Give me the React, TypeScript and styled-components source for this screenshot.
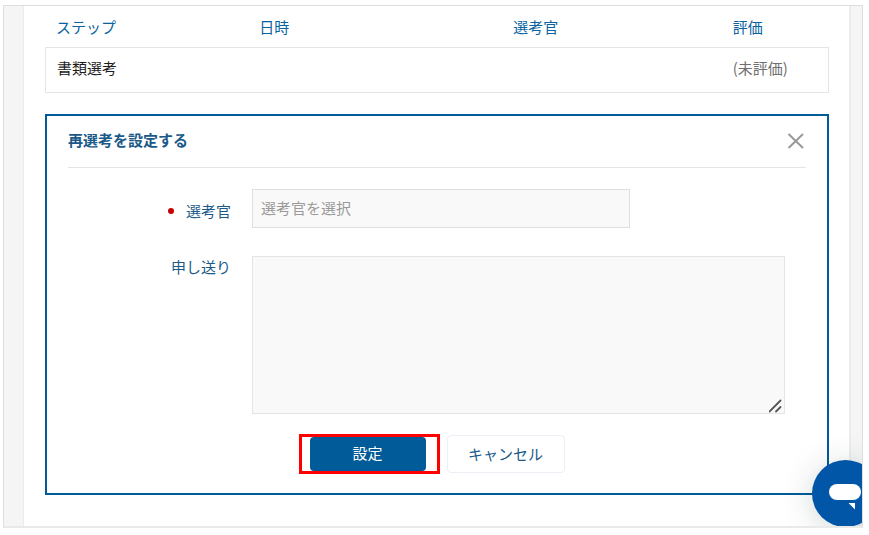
import React from "react";
import styled, { createGlobalStyle } from "styled-components";

const GlobalStyle = createGlobalStyle`
  * { box-sizing: border-box; }
  body {
    margin: 0;
    background: #fff;
    color: #222;
    font: 15px/22px "Noto Sans CJK JP", sans-serif;
  }
  button, input, textarea { font: inherit; }
`;

const Page = styled.main`
  padding: 5px 6px 7px 3px;
`;

const Frame = styled.div`
  position: relative;
  overflow: hidden;
  padding: 0 11px 0 19px;
  border: 1px solid #dedede;
  border-bottom: 2px solid #e9e9e9;
  background: #f5f5f5;
`;

const Sheet = styled.div`
  padding: 0 20px 31px 21px;
  border: solid #ececec;
  border-width: 0 2px 0 1px;
  background: #fff;
`;

const StepTable = styled.table`
  width: 100%;
  table-layout: fixed;
  border-collapse: separate;
  border-spacing: 0;
  text-align: left;
`;

const HeadCell = styled.th<{ $width?: string }>`
  width: ${(p) => p.$width ?? "auto"};
  height: 41px;
  padding: 0 12px;
  color: #0a629f;
  font-weight: 400;
  &:first-child { padding-left: 11px; }
`;

const Cell = styled.td<{ $muted?: boolean }>`
  height: 46px;
  padding: 0 12px 4px;
  border: solid #e5e5e5;
  border-width: 1px 0;
  color: ${(p) => (p.$muted ? "#707070" : "#1c1c1c")};
  &:first-child { padding-left: 11px; border-left-width: 1px; }
  &:last-child { border-right-width: 1px; }
`;

const Panel = styled.section`
  margin-top: 21px;
  padding: 0 21px 19px;
  border: 2px solid #005b98;
`;

const PanelHeader = styled.header`
  display: flex;
  align-items: center;
  justify-content: space-between;
  height: 52px;
  padding-bottom: 2px;
  border-bottom: 1px solid #e5e5e5;
`;

const Title = styled.h2`
  margin: 0;
  padding-bottom: 2px;
  color: #1b5a88;
  font-size: 15px;
  font-weight: 700;
`;

const CloseButton = styled.button`
  display: flex;
  padding: 0 1px 0 0;
  border: 0;
  background: none;
  color: #999;
`;

const Form = styled.form`
  display: grid;
  grid-template-columns: 163px 1fr;
  gap: 28px 21px;
  padding: 21px 21px 0 0;
`;

const Label = styled.label<{ $required?: boolean }>`
  display: flex;
  align-items: center;
  justify-content: flex-end;
  gap: 12px;
  align-self: ${(p) => (p.$required ? "center" : "start")};
  padding-top: ${(p) => (p.$required ? "4px" : "0")};
  color: #1b5a88;
  &::before {
    content: ${(p) => (p.$required ? '""' : "none")};
    width: 6px;
    height: 6px;
    border-radius: 50%;
    background: #c80000;
  }
`;

const TextInput = styled.input`
  width: 71%;
  height: 39px;
  padding: 0 8px 2px;
  border: 1px solid #dfdfdf;
  border-radius: 0;
  background: #f9f9f9;
  &::placeholder { color: #999; opacity: 1; }
`;

const NoteField = styled.div`
  position: relative;
  display: flex;
`;

const NoteArea = styled.textarea`
  width: 100%;
  height: 158px;
  padding: 8px;
  border: 1px solid #e5e5e5;
  background: #f9f9f9;
  resize: none;
`;

const Grip = styled.svg`
  position: absolute;
  right: 2px;
  bottom: 1px;
  pointer-events: none;
`;

const Actions = styled.div`
  grid-column: 1 / -1;
  display: flex;
  align-items: center;
  justify-content: center;
  gap: 7px;
  margin: -8px 0 0 10px;
`;

const Highlight = styled.div`
  display: flex;
  padding: 0 11px 0 8px;
  border: 3px solid #f00;
`;

const Button = styled.button<{ $primary?: boolean }>`
  width: ${(p) => (p.$primary ? "116px" : "118px")};
  height: ${(p) => (p.$primary ? "34px" : "38px")};
  padding: ${(p) => (p.$primary ? "0 0 2px" : "0")};
  border: ${(p) => (p.$primary ? "0" : "1px solid #eceff5")};
  border-radius: 4px;
  background: ${(p) => (p.$primary ? "#005b98" : "#fff")};
  color: ${(p) => (p.$primary ? "#fff" : "#1b5a88")};
`;

const ChatButton = styled.button`
  position: absolute;
  right: -17px;
  bottom: -1px;
  width: 67px;
  height: 67px;
  padding: 0;
  border: 0;
  border-radius: 50%;
  background: #0256a8;
  box-shadow: 0 4px 32px rgba(0, 40, 40, 0.18);
  svg { display: block; }
`;

export default function App() {
  return (
    <>
      <GlobalStyle />
      <Page>
        <Frame>
          <Sheet>
            <StepTable>
              <thead>
                <tr>
                  <HeadCell $width="25.8%">ステップ</HeadCell>
                  <HeadCell $width="32.4%">日時</HeadCell>
                  <HeadCell $width="28%">選考官</HeadCell>
                  <HeadCell>評価</HeadCell>
                </tr>
              </thead>
              <tbody>
                <tr>
                  <Cell>書類選考</Cell>
                  <Cell />
                  <Cell />
                  <Cell $muted>(未評価)</Cell>
                </tr>
              </tbody>
            </StepTable>
            <Panel aria-labelledby="panel-title">
              <PanelHeader>
                <Title id="panel-title">再選考を設定する</Title>
                <CloseButton type="button" aria-label="閉じる">
                  <svg width="18" height="18" viewBox="0 0 18 18" fill="none" stroke="currentColor" strokeWidth="2">
                    <path d="M1.500 2 16 16M16 2 1.500 16" />
                  </svg>
                </CloseButton>
              </PanelHeader>
              <Form onSubmit={(e) => e.preventDefault()}>
                <Label htmlFor="interviewer" $required>選考官</Label>
                <TextInput id="interviewer" placeholder="選考官を選択" required />
                <Label htmlFor="note">申し送り</Label>
                <NoteField>
                  <NoteArea id="note" />
                  <Grip width="14" height="14" viewBox="0 0 14 14" fill="none" stroke="#555" strokeWidth="1.8" aria-hidden="true">
                    <path d="M0.500 12.500 11.500 1.500M7 12.500 11.500 8" strokeLinecap="round" />
                  </Grip>
                </NoteField>
                <Actions>
                  <Highlight>
                    <Button type="submit" $primary>設定</Button>
                  </Highlight>
                  <Button type="button">キャンセル</Button>
                </Actions>
              </Form>
            </Panel>
          </Sheet>
          <ChatButton type="button" aria-label="チャット">
            <svg width="67" height="67" viewBox="0 0 67 67" fill="#fff">
              <rect x="17" y="24" width="32" height="16" rx="8" />
              <path d="M36.500 43H43V49.500Z" />
            </svg>
          </ChatButton>
        </Frame>
      </Page>
    </>
  );
}
